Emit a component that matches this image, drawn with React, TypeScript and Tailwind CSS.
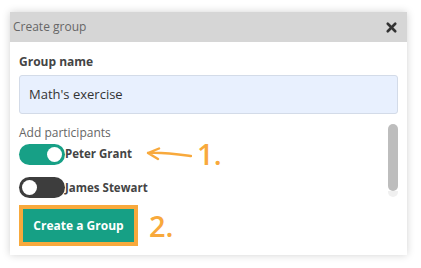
import { X } from "lucide-react";

const font = { fontFamily: '"Open Sans", "Noto Sans", sans-serif' };

function Toggle({ on }: { on: boolean }) {
  return (
    <div
      className={`flex h-[21px] w-[46px] shrink-0 items-center rounded-full px-[3px] ${
        on ? "justify-end bg-[#17a086]" : "justify-start bg-[#3d3d3d]"
      }`}
    >
      <div className="h-[15px] w-[15px] rounded-full bg-white" />
    </div>
  );
}

function Arrow() {
  return (
    <svg width="46" height="14" viewBox="0 0 46 14" fill="none" className="shrink-0">
      <path
        d="M2 6 C 16 5, 30 7, 45 9 M2 6 L13 1.5 M2 6 L12 12"
        stroke="#f8a93c"
        strokeWidth="2.4"
        strokeLinecap="round"
        strokeLinejoin="round"
      />
    </svg>
  );
}

export default function App() {
  return (
    <div className="min-h-[268px] bg-white pl-[10px] pt-[12px]" style={font}>
      <div className="w-[397px] bg-white shadow-[0_0_8px_rgba(0,0,0,0.18)]">
        <div className="flex h-[30px] items-center justify-between bg-[#d6d6d6] pl-[3px] pr-[8px]">
          <span className="text-[12px] text-[#666]">Create group</span>
          <X className="h-[15px] w-[15px] text-[#333]" strokeWidth={4.2} />
        </div>

        <div className="px-[9px] pb-[9px] pt-[12px]">
          <div className="text-[12px] font-bold leading-[16px] text-[#444]">Group name</div>
          <div className="mt-[5px] flex h-[39px] items-center rounded-[3px] border border-[#d3dbe8] bg-[#e8f0fe] px-[9px] text-[13px] text-[#333]">
            Math's exercise
          </div>

          <div className="mt-[10px] flex h-[73px]">
            <div className="flex-1">
              <div className="mt-[1px] text-[12px] leading-[16px] text-[#666]">Add participants</div>
              <div className="mt-[2px] flex items-center">
                <Toggle on />
                <span className="text-[11.5px] font-bold text-[#444]">Peter Grant</span>
                <div className="ml-[14px] flex items-center">
                  <Arrow />
                  <span className="ml-[5px] text-[29px] font-semibold leading-[22px] text-[#f8a93c]">1.</span>
                </div>
              </div>
              <div className="mt-[12px] flex items-center">
                <Toggle on={false} />
                <span className="text-[11.5px] font-bold text-[#444]">James Stewart</span>
              </div>
            </div>
            <div className="flex w-[10px] flex-col">
              <div className="h-[67px] rounded-full bg-[#bdbdbd]" />
              <div className="h-[6px] rounded-b-full bg-[#f0f0f0]" />
            </div>
          </div>

          <div className="mt-[8px] flex items-center">
            <div className="flex h-[41px] w-[119px] items-center justify-center border-[4px] border-[#f8a93c] bg-[#16a085] text-[12px] font-bold text-white">
              Create a Group
            </div>
            <span className="ml-[11px] text-[29px] font-semibold leading-[22px] text-[#f8a93c]">2.</span>
          </div>
        </div>
      </div>
    </div>
  );
}
